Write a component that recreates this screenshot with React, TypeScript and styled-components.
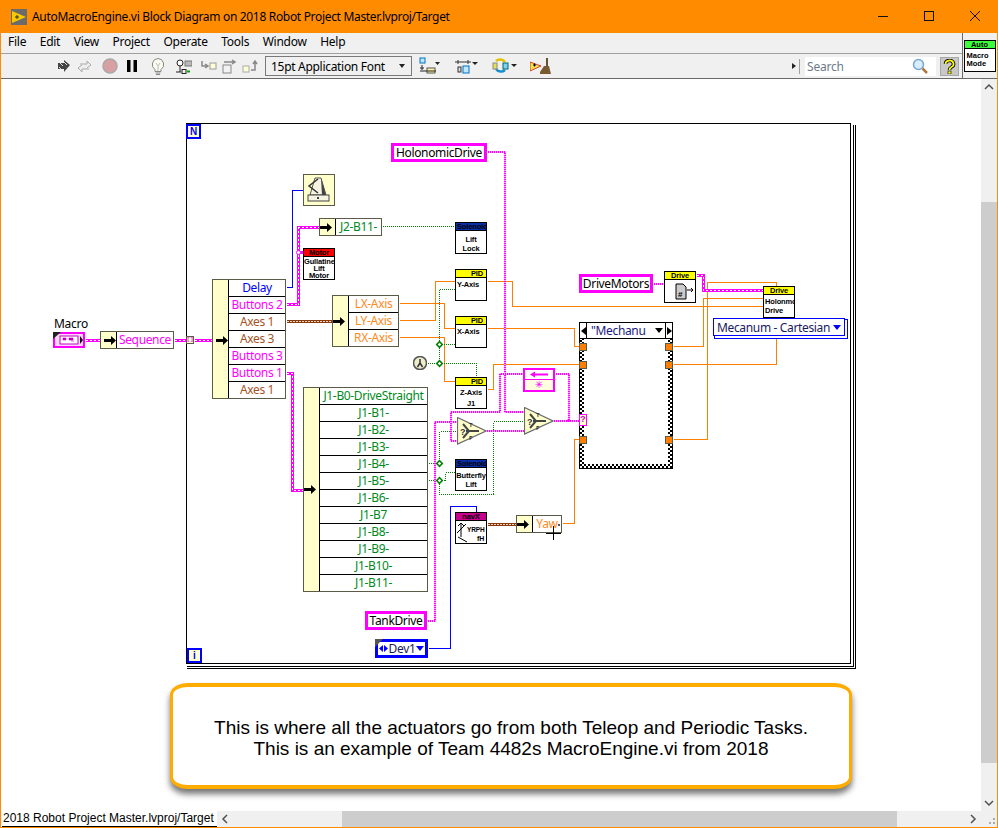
import React from "react";
import styled, { createGlobalStyle, css } from "styled-components";

const Global = createGlobalStyle`
  html, body { margin: 0; padding: 0; background: #fff; }
  #root { width: 998px; height: 828px; }
`;

const uiFont = `"Noto Sans", "Open Sans", sans-serif`;
const pixFont = `"Liberation Sans", Arial, sans-serif`;

const Window = styled.div`
  width: 998px; height: 828px; display: flex; flex-direction: column; box-sizing: border-box;
  border: 1px solid #ff8c00; border-top: 0; overflow: hidden; font-family: ${uiFont}; color: #000;
`;
const TitleBar = styled.div`
  height: 33px; flex: none; background: #ff8c00; margin: 0 -1px; display: flex; align-items: center; padding-left: 11px;
`;
const AppIcon = styled.svg`width: 16px; height: 16px; flex: none;`;
const TitleText = styled.div`
  margin-left: 5px; font-size: 12px; letter-spacing: -0.32px; white-space: nowrap; flex: 1;
`;
const WinButton = styled.svg`width: 46px; height: 33px; flex: none;`;

const TopArea = styled.div`display: flex; flex: none; height: 45px; background: #f0f0f0; border-bottom: 1px solid #696969;`;
const Bars = styled.div`flex: 1; display: flex; flex-direction: column;`;
const MenuBar = styled.div`
  height: 20px; flex: none; box-sizing: content-box; display: flex; align-items: flex-start; padding-left: 7px; gap: 13.5px; font-size: 12px; line-height: 18px; border-bottom: 1px solid #a0a0a0;
`;
const MenuItem = styled.span`white-space: nowrap; letter-spacing: -0.25px;`;
const Toolbar = styled.div`flex: 1; display: flex; align-items: center; padding-left: 56px; position: relative;`;
const ToolIcon = styled.svg<{ $ml: number }>`flex: none; margin-left: ${p => p.$ml}px;`;
const FontSelect = styled.div`
  width: 147px; height: 20px; box-sizing: border-box; margin-left: 7px; border: 1px solid #7a7a7a; background: #f0f0f0; display: flex; align-items: center;
  padding: 0 6px 0 5px; justify-content: space-between; font-size: 12px; letter-spacing: -0.3px; flex: none;
`;
const Caret = styled.span`width: 0; height: 0; border: 3.5px solid transparent; border-top: 4px solid #222; border-bottom: 0;`;
const Spacer = styled.div`flex: 1;`;
const Divider = styled.div`width: 1px; height: 15px; background: #a0a0a0; margin: 0 5px 0 3px;`;
const MiniArrow = styled.span`width: 0; height: 0; border: 3px solid transparent; border-left: 4px solid #222; border-right: 0;`;
const SearchBox = styled.div`
  width: 131px; height: 19px; background: #fff; display: flex; align-items: center; justify-content: space-between; padding: 0 8px 0 2px; box-sizing: border-box;
  font-size: 12px; letter-spacing: -0.2px; color: #6d7b8a; flex: none;
`;
const HelpBtn = styled.div`
  width: 19px; height: 19px; margin: 0 3px 0 4px; background: #c8c8c8; border: 1px solid #a8a8a8; box-sizing: border-box; display: flex; align-items: center; justify-content: center; flex: none;
`;
const SideIconPane = styled.div`
  width: 35px; flex: none; border-left: 1px solid #696969; display: flex; align-items: center; justify-content: center; box-sizing: border-box; padding-right: 1px;
`;
const SideIcon = styled.div`
  width: 32px; height: 32px; box-sizing: border-box; border: 1px solid #000; background: #fff; font: 700 7.5px/9px ${pixFont}; text-align: left;
`;
const SideHead = styled.div`background: #3cff3c; text-align: center; height: 7px; line-height: 7px; border-bottom: 1px solid #000;`;
const SideBody = styled.div`padding: 3px 0 0 2px; line-height: 8px;`;

const Middle = styled.div`flex: 1; display: flex; min-height: 0;`;
const Canvas = styled.div`flex: 1; position: relative; overflow: hidden; background: #fff;`;
const Layer = styled.div`position: absolute; left: -1px; top: -79px; width: 998px; height: 828px;`;
const WireSvg = styled.svg`position: absolute; left: 0; top: 0;`;

const VScroll = styled.div`width: 16px; flex: none; background: #f0f0f0; display: flex; flex-direction: column; align-items: center;`;
const ScrollEnd = styled.svg`flex: none;`;
const VThumb = styled.div`width: 16px; height: 561px; margin-top: 107px; background: #cdcdcd; flex: none;`;
const Fill = styled.div`flex: 1;`;
const HScrollRow = styled.div`height: 16px; flex: none; display: flex; align-items: stretch; background: #f0f0f0;`;
const StatusLabel = styled.div`
  width: 215px; flex: none; margin-left: 1px; box-sizing: border-box; border-top: 1px solid #000; border-bottom: 1px solid #000; background: #fff; margin-top: -1px;
  font: 12px/15px "Liberation Sans", sans-serif; white-space: nowrap; overflow: hidden; padding-left: 1px;
`;
const HThumb = styled.div`width: 555px; flex: none; background: #cdcdcd; margin-left: 109px;`;
const Grip = styled.svg`flex: none; margin-top: 4px;`;

const place = css<{ $x: number; $y: number }>`
  position: absolute; left: ${p => p.$x}px; top: ${p => p.$y}px;
`;
const diagramText = css`font-size: 12px; letter-spacing: -0.35px;`;

const Frame = styled.div<{ $x: number; $y: number }>`
  ${place}; width: 665px; height: 541px; box-sizing: border-box; border: 1px solid #000;
`;
const StackLine = styled.div<{ $x: number; $y: number; $w: number; $h: number }>`
  ${place}; width: ${p => p.$w}px; height: ${p => p.$h}px; box-sizing: border-box; border-right: 1px solid #000; border-bottom: 1px solid #000;
`;
const LoopTerm = styled.div<{ $x: number; $y: number }>`
  ${place}; width: 15px; height: 15px; box-sizing: border-box; border: 2px solid #0000ff; background: #ffffcc; color: #0000ff;
  font: 700 10px/11px "Liberation Sans", sans-serif; text-align: center;
`;
const Unbundle = styled.div<{ $x: number; $y: number; $w: number; $left: number }>`
  ${place}; width: ${p => p.$w}px; box-sizing: border-box; border: 1px solid #5a5a46; background: #fff; padding-left: ${p => p.$left}px;
  &::before { content: ""; position: absolute; left: 0; top: 0; bottom: 0; width: ${p => p.$left - 1}px; background: #ffffcc; border-right: 1px solid #000; }
`;
const Row = styled.div<{ $c: string }>`
  height: 16px; line-height: 15px; ${diagramText}; text-align: center; color: ${p => p.$c}; white-space: nowrap; overflow: hidden;
  & + & { border-top: 1px solid #000; height: 16px; }
`;
const Arrow = styled.svg<{ $x: number; $y: number }>`${place}; width: 12px; height: 9px;`;
const Vi = styled.div<{ $x: number; $y: number }>`
  ${place}; width: 32px; height: 32px; box-sizing: border-box; border: 1px solid #000; background: #fff; overflow: hidden;
  font: 700 7.5px/9px ${pixFont}; letter-spacing: -0.15px; text-align: center; color: #000;
`;
const ViHead = styled.div<{ $bg: string; $c?: string; $align?: string }>`
  height: 7px; line-height: 7px; background: ${p => p.$bg}; color: ${p => p.$c || "#000"}; text-align: ${p => p.$align || "center"}; border-bottom: 1px solid #000; white-space: nowrap;
  padding: 0 1px;
`;
const ViBody = styled.div<{ $align?: string; $pt?: number; $lh?: number }>`
  text-align: ${p => p.$align || "center"}; padding-top: ${p => p.$pt ?? 2}px; white-space: nowrap; line-height: ${p => p.$lh ?? 9}px; padding-left: ${p => (p.$align === "left" ? 1 : 0)}px;
`;
const ClusterConst = styled.div<{ $x: number; $y: number; $w: number }>`
  ${place}; width: ${p => p.$w}px; height: 19px; box-sizing: border-box; border: 3px solid #ff00ff; background: #fff;
  ${diagramText}; line-height: 13px; text-align: center; white-space: nowrap; color: #000; overflow: hidden;
`;
const LabelText = styled.div<{ $x: number; $y: number }>`${place}; font-size: 12px; line-height: 14px; letter-spacing: -0.3px;`;
const IconSvg = styled.svg<{ $x: number; $y: number }>`${place};`;
const TunnelBox = styled.div<{ $x: number; $y: number }>`
  ${place}; width: 8px; height: 8px; box-sizing: border-box; border: 1px solid #5a5a46; background: #ffffcc; display: flex; align-items: center; justify-content: center;
  font: 700 6px/6px "Liberation Mono", monospace; color: #ff00ff;
`;
const OrangeTunnel = styled.div<{ $x: number; $y: number }>`
  ${place}; width: 8px; height: 8px; box-sizing: border-box; border: 1px solid #5a5a46; background: #ff8000;
`;
const CaseFrame = styled.div<{ $x: number; $y: number }>`
  ${place}; width: 94px; height: 131px; box-sizing: border-box; padding: 0 4px 4px;
  background: repeating-conic-gradient(#000 0 25%, #fff 0 50%) 0 0 / 4px 4px; border: 1px solid #000; border-top: 0;
`;
const CaseInner = styled.div`width: 100%; height: 100%; background: #fff;`;
const CaseSelector = styled.div<{ $x: number; $y: number }>`
  ${place}; width: 94px; height: 17px; box-sizing: border-box; border: 1px solid #000; background: #fff; display: flex; align-items: center; ${diagramText}; color: #1a1a80;
`;
const SelArrow = styled.span<{ $dir: "l" | "r" }>`
  width: 7px; height: 100%; flex: none; display: flex; align-items: center; justify-content: center; box-sizing: border-box;
  ${p => (p.$dir === "l" ? "border-right: 1px solid #000;" : "border-left: 1px solid #000;")}
  &::after { content: ""; border: 4px solid transparent; ${p => (p.$dir === "l" ? "border-right: 5px solid #000; border-left: 0;" : "border-left: 5px solid #000; border-right: 0;")} }
`;
const SelText = styled.span`flex: 1; padding-left: 4px; white-space: nowrap; overflow: hidden;`;
const SelCaret = styled.span`
  width: 0; height: 0; border: 4px solid transparent; border-top: 5px solid #000; border-bottom: 0; margin-right: 2px;
`;
const QTerm = styled.div<{ $x: number; $y: number }>`
  ${place}; width: 8px; height: 12px; box-sizing: border-box; border: 1px solid #ff00ff; background: #ffffcc; color: #d000d0;
  font: 700 9px/10px "Liberation Mono", monospace; text-align: center;
`;
const RingConst = styled.div<{ $x: number; $y: number }>`
  ${place}; width: 132px; height: 18px; box-sizing: border-box; border: 1px solid #0000ff; background: #fff; box-shadow: 2px 2px 0 0 #fff, 2px 2px 0 1px #0000ff;
  ${diagramText}; line-height: 15px; color: #1a1a60; display: flex; align-items: center; justify-content: space-between; padding: 0 3px; white-space: nowrap;
`;
const BlueCaret = styled.span`width: 0; height: 0; border: 4px solid transparent; border-top: 5px solid #0000ff; border-bottom: 0;`;
const DevRing = styled.div<{ $x: number; $y: number }>`
  ${place}; width: 53px; height: 19px; box-sizing: border-box; border: 3px solid #0000ff; background: #fff; ${diagramText}; line-height: 13px; color: #1a1a60;
  display: flex; align-items: center; justify-content: space-between; padding: 0 1px;
  &::before { content: ""; position: absolute; left: -3px; top: -3px; border: 4px solid transparent; border-left: 4px solid #555; border-top: 4px solid #555; }
`;
const LocalBox = styled.div<{ $x: number; $y: number }>`
  ${place}; width: 32px; height: 24px; box-sizing: border-box; border: 2px solid #ff00ff; background: #ffffcc; display: flex; flex-direction: column;
`;
const LocalTop = styled.div`height: 10px; background: #fff; border-bottom: 1px solid #ff00ff; color: #ff00ff; display: flex; align-items: center; justify-content: center;`;
const LocalBot = styled.div`flex: 1; color: #ff00ff; font: 10px/10px "DejaVu Sans", sans-serif; text-align: center; background: #ffffe0;`;
const Wait = styled.div<{ $x: number; $y: number }>`
  ${place}; width: 32px; height: 32px; box-sizing: border-box; border: 1px solid #5a5a46; background: #ffffcc; display: flex; align-items: center; justify-content: center;
`;
const CalloutBox = styled.div`
  position: absolute; left: 170px; top: 683px; width: 682px; height: 106px; box-sizing: border-box; border: solid #ffac00; border-width: 4px 3px; border-radius: 18px / 12px; background: #fff;
  box-shadow: 0 5px 6px rgba(0,0,0,.55); display: flex; align-items: center; justify-content: center; text-align: center;
  font: 19px/21px "Liberation Sans", Arial, sans-serif; color: #000; padding-top: 3px;
`;

type Pt = [number, number];
const pts = (p: Pt[]) => p.map(([x, y]) => `${x + 0.5},${y + 0.5}`).join(" ");

function Orange({ p }: { p: Pt[] }) { return <polyline points={pts(p)} fill="none" stroke="#ff8000" strokeWidth={1} shapeRendering="crispEdges" />; }
function Blue({ p }: { p: Pt[] }) { return <polyline points={pts(p)} fill="none" stroke="#0000ff" strokeWidth={1} shapeRendering="crispEdges" />; }
function Green({ p }: { p: Pt[] }) { return <polyline points={pts(p)} fill="none" stroke="#008000" strokeWidth={1} strokeDasharray="1 1" shapeRendering="crispEdges" />; }
function Pink({ p }: { p: Pt[] }) {
  return (<g fill="none" shapeRendering="crispEdges"><polyline points={pts(p)} stroke="#ffa8ff" strokeWidth={2} /><polyline points={pts(p)} stroke="#ff00ff" strokeWidth={2} strokeDasharray="1 1" /></g>);
}
function Cluster({ p }: { p: Pt[] }) {
  return (<g fill="none" shapeRendering="crispEdges"><polyline points={pts(p)} stroke="#ff00ff" strokeWidth={3} /><polyline points={pts(p)} stroke="#fff" strokeWidth={1} strokeDasharray="2 2" /></g>);
}
function Brown({ p }: { p: Pt[] }) {
  return (<g fill="none" shapeRendering="crispEdges"><polyline points={pts(p)} stroke="#8a3a0a" strokeWidth={3} /><polyline points={pts(p)} stroke="#f0d8c8" strokeWidth={1} strokeDasharray="2 1" /></g>);
}
function GJ({ x, y }: { x: number; y: number }) {
  return <rect x={x - 1.500} y={y - 1.500} width={4} height={4} transform={`rotate(45 ${x + 0.5} ${y + 0.5})`} fill="#fff" stroke="#008000" strokeWidth={1.500} />;
}

const BlackArrow = ({ x, y }: { x: number; y: number }) => (
  <Arrow $x={x} $y={y} viewBox="0 0 12 9"><path d="M0 3h7V0l5 4.5L7 9V6H0z" fill="#000" /></Arrow>
);

const magenta = "#ff00ff", orange = "#ff8a1e", green = "#008a1e", brown = "#a6531f", blue = "#0000ff";

function SelectPrim({ x, y }: { x: number; y: number }) {
  return (
    <IconSvg $x={x} $y={y} width={30} height={28} viewBox="0 0 30 28">
      <path d="M.5.5L29 14 .5 27z" fill="#ffffcc" stroke="#6a6a6a" strokeWidth={1.2} />
      <path d="M9 14h13M6 7l6 7-6 7" fill="none" stroke="#444" strokeWidth={2} />
      <text x={3} y={18} fontFamily="Liberation Sans" fontSize={9} fontWeight={700} fill="#333">?</text>
      <text x={12} y={10} fontFamily="Liberation Mono" fontSize={6} fontWeight={700} fill="#333">T</text>
      <text x={12} y={23} fontFamily="Liberation Mono" fontSize={6} fontWeight={700} fill="#333">F</text>
    </IconSvg>
  );
}

export default function App() {
  return (
    <>
      <Global />
      <Window>
        <TitleBar>
          <AppIcon viewBox="0 0 16 16"><rect width="16" height="16" fill="#6b6b6b" /><path d="M1 2l14 6L1 14z" fill="#f5c800" /><path d="M4 8h4M6 6v4" stroke="#333" /></AppIcon>
          <TitleText>AutoMacroEngine.vi Block Diagram on 2018 Robot Project Master.lvproj/Target</TitleText>
          <WinButton viewBox="0 0 46 33"><path d="M18 16.5h10" stroke="#111" /></WinButton>
          <WinButton viewBox="0 0 46 33"><rect x="18.5" y="11.5" width="9" height="9" fill="none" stroke="#111" /></WinButton>
          <WinButton viewBox="0 0 46 33"><path d="M18 11l10 10M28 11L18 21" stroke="#111" /></WinButton>
        </TitleBar>
        <TopArea>
          <Bars>
            <MenuBar>
              {["File", "Edit", "View", "Project", "Operate", "Tools", "Window", "Help"].map(m => <MenuItem key={m}>{m}</MenuItem>)}
            </MenuBar>
            <Toolbar>
              <ToolIcon $ml={0} width={14} height={14} viewBox="0 0 14 14"><path d="M1 4h6V1l6 5-6 7v-3H1z" fill="#444" /><path d="M3 4l3 3M7 3l3 3M2 8l2 2" stroke="#ddd" /></ToolIcon>
              <ToolIcon $ml={6} width={15} height={15} viewBox="0 0 15 15"><path d="M3 5h7V2l4 4-4 3M12 10H5v3L1 9l4-3" fill="#eee" stroke="#aaa" /></ToolIcon>
              <ToolIcon $ml={10} width={16} height={16} viewBox="0 0 16 16"><circle cx="8" cy="8" r="7" fill="#d8a0a0" stroke="#a8a8a8" strokeWidth="1.500" /></ToolIcon>
              <ToolIcon $ml={9} width={10} height={12} viewBox="0 0 10 12"><path d="M0 0h3.5v12H0zM6.5 0H10v12H6.5z" fill="#000" /></ToolIcon>
              <ToolIcon $ml={14} width={14} height={17} viewBox="0 0 14 17"><path d="M7 .5a6 6 0 0 0-3 11v2h6v-2a6 6 0 0 0-3-11z" fill="#fbfbf0" stroke="#888" /><path d="M5 5l2 3 2-3M7 8v5" fill="none" stroke="#bbb" /><path d="M4.500 15h5M5 16.500h4" stroke="#888" /></ToolIcon>
              <ToolIcon $ml={11} width={16} height={15} viewBox="0 0 16 15"><circle cx="4" cy="4" r="3" fill="#fff" stroke="#222" /><rect x="9" y="2" width="7" height="5" fill="#bbb" stroke="#777" /><path d="M4 7v6M0 13h5" stroke="#222" /><rect x="6" y="10.500" width="4" height="4" fill="none" stroke="#222" /><path d="M11 12.500h3" stroke="#0a0" strokeWidth="2" /></ToolIcon>
              <ToolIcon $ml={9} width={16} height={12} viewBox="0 0 16 12"><path d="M1 1v5h5M4 4l3 2-3 2" fill="none" stroke="#888" strokeWidth="1.500" /><rect x="9" y="3" width="6" height="6" fill="#ffffd8" stroke="#999" /></ToolIcon>
              <ToolIcon $ml={5} width={16} height={15} viewBox="0 0 16 15"><rect x="1" y="6" width="8" height="8" fill="#f2f2f2" stroke="#888" /><path d="M2 3h10M10 1l3 2-3 2" fill="none" stroke="#888" strokeWidth="1.500" /></ToolIcon>
              <ToolIcon $ml={4} width={16} height={14} viewBox="0 0 16 14"><rect x="1" y="7" width="6" height="6" fill="#ffffd8" stroke="#aaa" /><path d="M9 11h4V3M11 5l2-3 2 3" fill="none" stroke="#888" strokeWidth="1.500" /></ToolIcon>
              <FontSelect>15pt Application Font<Caret /></FontSelect>
              <ToolIcon $ml={7} width={21} height={18} viewBox="0 0 21 18"><rect x="1" y="1" width="5" height="5" fill="#bfe8ff" stroke="#0070c0" /><path d="M3 8v5M1 11h4" stroke="#222" /><rect x="8" y="11" width="8" height="5" fill="#fff0a0" stroke="#555" /><path d="M1 14h16" stroke="#222" /><path d="M16 5h5l-2.500 3z" fill="#222" /></ToolIcon>
              <ToolIcon $ml={14} width={24} height={18} viewBox="0 0 24 18"><path d="M1 5h16M4 3v4M14 3v4" stroke="#333" /><rect x="4" y="10" width="3" height="5" fill="#ddd" stroke="#333" /><rect x="9" y="9" width="6" height="7" fill="#bfe8ff" stroke="#0070c0" /><path d="M18 5h6l-3 3z" fill="#222" /></ToolIcon>
              <ToolIcon $ml={13} width={26} height={18} viewBox="0 0 26 18"><path d="M5 4a6 6 0 0 1 9 1" fill="none" stroke="#e0c000" strokeWidth="2.500" /><path d="M14 13a6 6 0 0 1-9-1" fill="none" stroke="#1890d0" strokeWidth="2.500" /><rect x="2" y="6" width="4" height="6" fill="#e8e050" stroke="#888" /><rect x="12" y="6" width="5" height="6" fill="#80d0f0" stroke="#067" /><path d="M20 7h6l-3 3z" fill="#222" /></ToolIcon>
              <ToolIcon $ml={13} width={21} height={17} viewBox="0 0 21 17"><path d="M0 4l11 4-11 5z" fill="#f2e050" stroke="#c00" strokeWidth=".7" /><path d="M3 7h3M4.500 5.500v3" stroke="#000" /><path d="M17 0v8" stroke="#6a5030" strokeWidth="2" /><path d="M10 14l4-6h5l2 8H10z" fill="#7a5a30" /></ToolIcon>
              <Spacer />
              <MiniArrow />
              <Divider />
              <SearchBox>Search
                <svg width="16" height="16" viewBox="0 0 16 16"><circle cx="6.500" cy="6.500" r="5" fill="#d8eeff" stroke="#7aa7cf" strokeWidth="1.500" /><path d="M10.500 10.500l4.500 4.500" stroke="#b07840" strokeWidth="2.500" /></svg>
              </SearchBox>
              <HelpBtn><svg width="13" height="15" viewBox="0 0 13 15"><path d="M2.500 5a4 3.500 0 1 1 6 3c-1.500.8-2 1.500-2 3" fill="none" stroke="#000" strokeWidth="3.500" /><path d="M2.500 5a4 3.500 0 1 1 6 3c-1.500.8-2 1.500-2 3" fill="none" stroke="#ffff00" strokeWidth="1.800" /><rect x="5" y="12" width="3" height="3" fill="#ffff00" stroke="#000" strokeWidth=".6" /></svg></HelpBtn>
            </Toolbar>
          </Bars>
          <SideIconPane>
            <SideIcon><SideHead>Auto</SideHead><SideBody>Macro<br />Mode</SideBody></SideIcon>
          </SideIconPane>
        </TopArea>
        <Middle>
          <Canvas>
            <Layer>
              <StackLine $x={187} $y={125} $w={669} $h={544} />
              <StackLine $x={187} $y={125} $w={667} $h={542} />
              <Frame $x={186} $y={123} />
              <WireSvg width={998} height={828}>
                <Cluster p={[[85, 340], [100, 340]]} />
                <Cluster p={[[174, 340], [186, 340]]} />
                <Cluster p={[[194, 340], [212, 340]]} />
                <Blue p={[[286, 287], [292, 287], [292, 190], [303, 190]]} />
                <Cluster p={[[286, 304], [298, 304], [298, 227], [319, 227]]} />
                <Cluster p={[[298, 252], [303, 252]]} />
                <Brown p={[[286, 321], [332, 321]]} />
                <Cluster p={[[286, 373], [292, 373], [292, 490], [303, 490]]} />
                <Green p={[[382, 226], [455, 226]]} />
                <Orange p={[[399, 303], [444, 303], [444, 328], [455, 328]]} />
                <Orange p={[[399, 320], [435, 320], [435, 281], [455, 281]]} />
                <Orange p={[[399, 337], [444, 337], [444, 381], [455, 381]]} />
                <Orange p={[[487, 281], [512, 281], [512, 306], [763, 306]]} />
                <Orange p={[[487, 328], [574, 328], [574, 346], [579, 346]]} />
                <Orange p={[[673, 346], [703, 346], [703, 298], [763, 298]]} />
                <Orange p={[[487, 389], [493, 389], [493, 364], [579, 364]]} />
                <Orange p={[[673, 364], [776, 364], [776, 338]]} />
                <Orange p={[[673, 439], [707, 439], [707, 282], [776, 282], [776, 286]]} />
                <Orange p={[[562, 523], [574, 523], [574, 439], [579, 439]]} />
                <Green p={[[439, 289], [439, 363]]} />
                <Green p={[[439, 289], [455, 289]]} />
                <Green p={[[439, 344], [455, 344]]} />
                <Green p={[[427, 363], [476, 363], [476, 377]]} />
                <Green p={[[428, 463], [439, 463], [439, 431], [457, 431]]} />
                <Green p={[[428, 480], [439, 480], [439, 494], [493, 494], [493, 421], [524, 421]]} />
                <Green p={[[439, 480], [445, 480], [445, 472], [455, 472]]} />
                <Pink p={[[487, 151], [504, 151], [504, 411], [524, 411]]} />
                <Pink p={[[427, 620], [434, 620], [434, 421], [457, 421]]} />
                <Pink p={[[457, 440], [450, 440], [450, 411], [499, 411], [499, 373], [523, 373]]} />
                <Pink p={[[555, 373], [568, 373], [568, 420]]} />
                <Pink p={[[486, 430], [524, 430]]} />
                <Pink p={[[553, 420], [579, 420]]} />
                <Pink p={[[653, 283], [664, 283]]} />
                <Cluster p={[[696, 275], [703, 275], [703, 290], [763, 290]]} />
                <Blue p={[[428, 648], [450, 648], [450, 506], [476, 506], [476, 512]]} />
                <Brown p={[[487, 524], [516, 524]]} />
                <GJ x={439} y={344} />
                <GJ x={439} y={363} />
                <GJ x={439} y={463} />
                <GJ x={439} y={480} />
                <circle cx={298.500} cy={252.500} r={2} fill="#fff" stroke="#ff00ff" />
                <circle cx={568.500} cy={420.500} r={1.500} fill="#ff00ff" />
              </WireSvg>

              <LoopTerm $x={186} $y={124}>N</LoopTerm>
              <LoopTerm $x={187} $y={648}>i</LoopTerm>

              <LabelText $x={54} $y={317}>Macro</LabelText>
              <IconSvg $x={53} $y={332} width={32} height={16} viewBox="0 0 32 16">
                <rect x="1" y="1" width="30" height="14" fill="#ffd8ff" stroke="#ff00ff" strokeWidth="2" />
                <rect x="7" y="4" width="18" height="8" fill="#fff" stroke="#c000c0" />
                <path d="M10 6h3v2h-3zM16 6h4v2h-4zM18 9h3" stroke="#c000c0" fill="#c000c0" strokeWidth=".6" />
                <path d="M0 0h8L0 7z" fill="#222" />
                <path d="M27 4l3 4-3 4z" fill="#111" />
              </IconSvg>
              <Unbundle $x={100} $y={331} $w={74} $left={16}><Row $c={magenta}>Sequence</Row></Unbundle>
              <BlackArrow x={104} y={336} />
              <TunnelBox $x={186} $y={336}>[]</TunnelBox>

              <Unbundle $x={212} $y={279} $w={74} $left={16}>
                <Row $c={blue}>Delay</Row>
                <Row $c={magenta}>Buttons 2</Row>
                <Row $c={brown}>Axes 1</Row>
                <Row $c={brown}>Axes 3</Row>
                <Row $c={magenta}>Buttons 3</Row>
                <Row $c={magenta}>Buttons 1</Row>
                <Row $c={brown}>Axes 1</Row>
              </Unbundle>
              <BlackArrow x={216} y={336} />

              <Wait $x={303} $y={174}>
                <svg width="24" height="26" viewBox="0 0 24 26">
                  <path d="M8 1h6l5 17H3z" fill="#f4f4e0" stroke="#555" /><path d="M11 2L2 9l9 7" fill="none" stroke="#333" strokeWidth="1.500" />
                  <path d="M14 1l5 17h-4z" fill="#444" /><rect x="1" y="18" width="21" height="6" fill="#f4f4e0" stroke="#444" /><rect x="10" y="20" width="2" height="2" fill="#444" />
                </svg>
              </Wait>

              <Unbundle $x={319} $y={218} $w={63} $left={16}><Row $c={green}>J2-B11-</Row></Unbundle>
              <BlackArrow x={320} y={223} />

              <Vi $x={303} $y={248}>
                <ViHead $bg="#ff0000">Motor</ViHead>
                <ViBody $pt={1} $lh={7}>Gullatine<br />Lift<br />Motor</ViBody>
              </Vi>
              <Vi $x={455} $y={222}>
                <ViHead $bg="#0a2fa8">Solenoid</ViHead>
                <ViBody $pt={4}>Lift<br />Lock</ViBody>
              </Vi>

              <Unbundle $x={332} $y={295} $w={67} $left={16}>
                <Row $c={orange}>LX-Axis</Row>
                <Row $c={orange}>LY-Axis</Row>
                <Row $c={orange}>RX-Axis</Row>
              </Unbundle>
              <BlackArrow x={333} y={317} />

              <Vi $x={455} $y={269}><ViHead $bg="#ffff00" $align="right">PID&nbsp;</ViHead><ViBody $align="left">Y-Axis</ViBody></Vi>
              <Vi $x={455} $y={316}><ViHead $bg="#ffff00" $align="right">PID&nbsp;</ViHead><ViBody $align="left">X-Axis</ViBody></Vi>
              <Vi $x={455} $y={377}><ViHead $bg="#ffff00" $align="right">PID&nbsp;</ViHead><ViBody $pt={1} $lh={11}>Z-Axis<br />J1</ViBody></Vi>

              <ClusterConst $x={391} $y={143} $w={96}>HolonomicDrive</ClusterConst>
              <IconSvg $x={413} $y={356} width={14} height={14} viewBox="0 0 14 14">
                <circle cx="7" cy="7" r="6.500" fill="#eeeecc" stroke="#555" strokeWidth="1.500" />
                <path d="M7 3v4M4.500 11L7 7l2.500 4" fill="none" stroke="#333" strokeWidth="1.500" />
              </IconSvg>

              <Unbundle $x={303} $y={387} $w={125} $left={16}>
                {["J1-B0-DriveStraight", "J1-B1-", "J1-B2-", "J1-B3-", "J1-B4-", "J1-B5-", "J1-B6-", "J1-B7", "J1-B8-", "J1-B9-", "J1-B10-", "J1-B11-"].map(t => <Row key={t} $c={green}>{t}</Row>)}
              </Unbundle>
              <BlackArrow x={304} y={485} />

              <SelectPrim x={457} y={417} />
              <SelectPrim x={524} y={407} />

              <LocalBox $x={523} $y={368}>
                <LocalTop><svg width="20" height="7" viewBox="0 0 20 7"><path d="M1 3.500l5-3v2h13v2H6v2z" fill="#ff00ff" /></svg></LocalTop>
                <LocalBot>✳</LocalBot>
              </LocalBox>

              <Vi $x={455} $y={459}><ViHead $bg="#0a2fa8">Solenoid</ViHead><ViBody $pt={3}>Butterfly<br />Lift</ViBody></Vi>

              <Vi $x={455} $y={512}>
                <ViHead $bg="#c8008c">navX</ViHead>
                <svg width="30" height="22" viewBox="0 0 30 22">
                  <path d="M5 2v14M2 5l3-3 3 3M2 16l9 5M1 12l9-9" fill="none" stroke="#000" />
                  <text x="11" y="11" fontFamily="Liberation Sans" fontSize="6.500" fontWeight="700">YRPH</text>
                  <text x="21" y="20" fontFamily="Liberation Sans" fontSize="7" fontWeight="700">fH</text>
                </svg>
              </Vi>
              <Unbundle $x={516} $y={515} $w={46} $left={16}><Row $c={orange}>Yaw</Row></Unbundle>
              <BlackArrow x={517} y={520} />
              <IconSvg $x={546} $y={523} width={16} height={17} viewBox="0 0 16 17"><path d="M7.500 3v14M0 10.500h15" stroke="#000" fill="none" /><rect x="12" y="1" width="2" height="2" fill="#555" /></IconSvg>

              <ClusterConst $x={579} $y={274} $w={74}>DriveMotors</ClusterConst>
              <Vi $x={664} $y={271}>
                <ViHead $bg="#ffff00">Drive</ViHead>
                <svg width="30" height="22" viewBox="0 0 30 22">
                  <path d="M11 4h7l3 3v12h-10z" fill="#ccc" stroke="#000" />
                  <text x="13" y="17" fontFamily="Liberation Sans" fontSize="8" fontWeight="700">#</text>
                  <path d="M22 10h6M26 8l2 2-2 2" fill="none" stroke="#000" />
                </svg>
              </Vi>
              <Vi $x={763} $y={286}>
                <ViHead $bg="#ffff00">Drive</ViHead>
                <ViBody $align="left" $pt={2}>Holonmo<br />Drive</ViBody>
              </Vi>
              <RingConst $x={713} $y={318}>Mecanum - Cartesian<BlueCaret /></RingConst>

              <CaseFrame $x={579} $y={338}><CaseInner /></CaseFrame>
              <CaseSelector $x={579} $y={322}>
                <SelArrow $dir="l" /><SelText>"Mechanu</SelText><SelCaret /><SelArrow $dir="r" />
              </CaseSelector>
              <OrangeTunnel $x={579} $y={343} />
              <OrangeTunnel $x={579} $y={361} />
              <OrangeTunnel $x={579} $y={436} />
              <OrangeTunnel $x={665} $y={343} />
              <OrangeTunnel $x={665} $y={361} />
              <OrangeTunnel $x={665} $y={436} />
              <QTerm $x={579} $y={414}>?</QTerm>

              <ClusterConst $x={365} $y={611} $w={62}>TankDrive</ClusterConst>
              <DevRing $x={375} $y={639}>
                <svg width="9" height="7" viewBox="0 0 9 7"><path d="M4 0v7L0 3.500zM5 0v7l4-3.500z" fill="#0000ff" /></svg>
                Dev1<BlueCaret />
              </DevRing>

              <CalloutBox>
                <div>This is where all the actuators go from both Teleop and Periodic Tasks.<br />This is an example of Team 4482s MacroEngine.vi from 2018</div>
              </CalloutBox>
            </Layer>
          </Canvas>
          <VScroll>
            <ScrollEnd width="16" height="16" viewBox="0 0 16 16"><path d="M4 10l4-4 4 4" fill="none" stroke="#505050" strokeWidth="1.500" /></ScrollEnd>
            <VThumb />
            <Fill />
            <ScrollEnd width="16" height="16" viewBox="0 0 16 16"><path d="M4 6l4 4 4-4" fill="none" stroke="#505050" strokeWidth="1.500" /></ScrollEnd>
          </VScroll>
        </Middle>
        <HScrollRow>
          <StatusLabel>2018 Robot Project Master.lvproj/Target</StatusLabel>
          <ScrollEnd width="16" height="16" viewBox="0 0 16 16"><path d="M10 4L6 8l4 4" fill="none" stroke="#505050" strokeWidth="1.500" /></ScrollEnd>
          <HThumb />
          <Fill />
          <ScrollEnd width="16" height="16" viewBox="0 0 16 16"><path d="M6 4l4 4-4 4" fill="none" stroke="#505050" strokeWidth="1.500" /></ScrollEnd>
          <Grip width="16" height="12" viewBox="0 0 16 12"><path d="M12 3h2v2h-2zM8 7h2v2H8zM12 7h2v2h-2z" fill="#aaa" /></Grip>
        </HScrollRow>
      </Window>
    </>
  );
}
